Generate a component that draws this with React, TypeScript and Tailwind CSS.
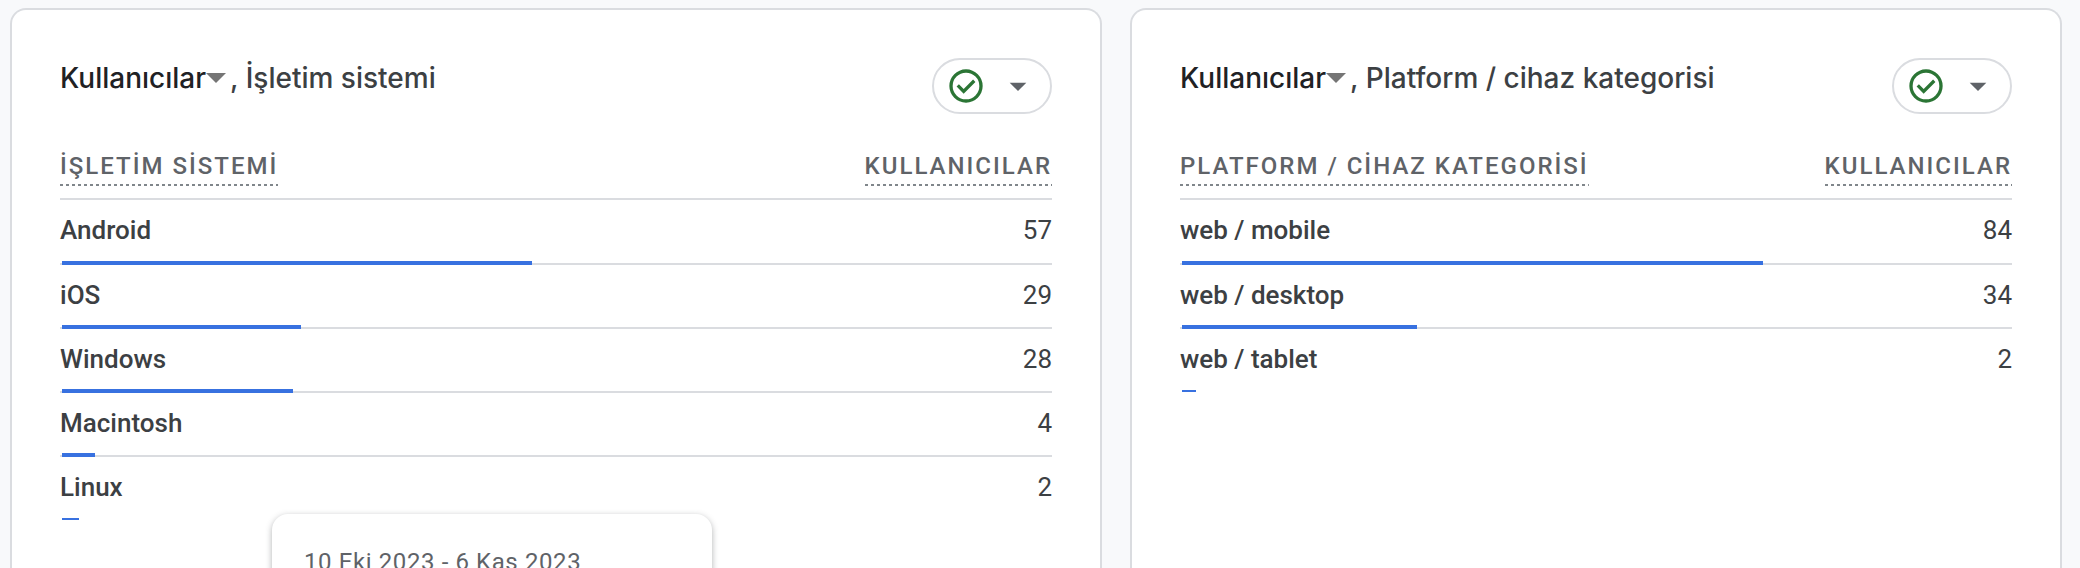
type Row = { name: string; users: number };

const systems: Row[] = [
  { name: "Android", users: 57 },
  { name: "iOS", users: 29 },
  { name: "Windows", users: 28 },
  { name: "Macintosh", users: 4 },
  { name: "Linux", users: 2 },
];

const platforms: Row[] = [
  { name: "web / mobile", users: 84 },
  { name: "web / desktop", users: 34 },
  { name: "web / tablet", users: 2 },
];

function StatusButton() {
  return (
    <button
      type="button"
      aria-label="Veri kalitesi"
      className="flex h-14 shrink-0 items-center gap-3 rounded-full border-2 border-[#dadce0] px-3"
    >
      <svg viewBox="0 0 24 24" className="size-10 fill-[#2b7535]">
        <path d="m10.6 16.6 7.05-7.05-1.4-1.4-5.65 5.65-2.85-2.85-1.4 1.4ZM12 22q-2.075 0-3.9-.788-1.825-.787-3.175-2.137-1.35-1.35-2.137-3.175Q2 14.075 2 12t.788-3.9q.787-1.825 2.137-3.175 1.35-1.35 3.175-2.137Q9.925 2 12 2t3.9.788q1.825.787 3.175 2.137 1.35 1.35 2.137 3.175Q22 9.925 22 12t-.788 3.9q-.787 1.825-2.137 3.175-1.35 1.35-3.175 2.137Q14.075 22 12 22Zm0-2q3.35 0 5.675-2.325Q20 15.35 20 12q0-3.35-2.325-5.675Q15.35 4 12 4 8.65 4 6.325 6.325 4 8.65 4 12q0 3.35 2.325 5.675Q8.65 20 12 20Z" />
      </svg>
      <svg viewBox="0 0 24 24" className="size-10 fill-[#5f6368]">
        <path d="M7 10l5 5 5-5z" />
      </svg>
    </button>
  );
}

function ColumnLabel({ text }: { text: string }) {
  return (
    <span className="inline-block bg-[repeating-linear-gradient(to_right,#80868b_0_3px,transparent_3px_6px)] bg-[length:100%_2px] bg-bottom bg-no-repeat pb-[2px] leading-9 tracking-[2px]">
      {text}
    </span>
  );
}

function ReportCard({
  dimension,
  column,
  rows,
}: {
  dimension: string;
  column: string;
  rows: Row[];
}) {
  const total = rows.reduce((sum, row) => sum + row.users, 0);

  return (
    <section className="min-w-0 rounded-t-2xl border-2 border-b-0 border-[#dadce0] bg-white px-12 pt-12">
      <div className="flex items-start justify-between">
        <h2 className="flex items-center font-[Inter,sans-serif] text-[28px] leading-10 font-[450] text-[#3c4043]">
          <button type="button" className="flex items-center text-[#202124]">
            Kullanıcılar
            <svg viewBox="0 0 20 10" className="h-[10px] w-5 fill-[#757575]">
              <path d="M0 0h20L10 10z" />
            </svg>
          </button>
          <span className="ml-1">, {dimension}</span>
        </h2>
        <StatusButton />
      </div>

      <table className="mt-8 w-full border-separate border-spacing-0">
        <thead>
          <tr className="h-[54px] text-2xl text-[#5f6368]">
            <th scope="col" className="border-b-2 border-[#dadce0] p-0 pb-3 text-left align-bottom font-medium">
              <ColumnLabel text={column} />
            </th>
            <th scope="col" className="border-b-2 border-[#dadce0] p-0 pb-3 text-right align-bottom font-medium">
              <ColumnLabel text="KULLANICILAR" />
            </th>
          </tr>
        </thead>
        <tbody className="text-[26px] leading-10 text-[#3c4043]">
          {rows.map((row, i) => {
            const last = i === rows.length - 1;
            return (
              <tr key={row.name} className="relative h-16 first:h-[65px]">
                <th
                  scope="row"
                  className={`p-0 pt-[10px] text-left align-top font-medium ${last ? "" : "border-b-2 border-[#dadce0]"}`}
                >
                  {row.name}
                  {/* share of the total, drawn over the row border */}
                  <div className="absolute inset-x-0 bottom-0 pl-[2px]">
                    <div
                      className={`bg-[#3871e0] ${last ? "mb-px h-[2px]" : "h-1"}`}
                      style={{ width: `${(row.users / total) * 100}%` }}
                    />
                  </div>
                </th>
                <td
                  className={`p-0 pt-[10px] text-right align-top ${last ? "" : "border-b-2 border-[#dadce0]"}`}
                >
                  {row.users}
                </td>
              </tr>
            );
          })}
        </tbody>
      </table>
    </section>
  );
}

export default function App() {
  return (
    <main className="relative grid h-screen grid-cols-[273fr_233fr] gap-7 overflow-hidden bg-[#f8f9fb] pt-2 pr-[18px] pl-[10px] font-[Roboto,sans-serif]">
      <ReportCard
        dimension="İşletim sistemi"
        column="İŞLETİM SİSTEMİ"
        rows={systems}
      />
      <ReportCard
        dimension="Platform / cihaz kategorisi"
        column="PLATFORM / CİHAZ KATEGORİSİ"
        rows={platforms}
      />

      <div
        role="tooltip"
        className="absolute top-[514px] left-[272px] w-[440px] rounded-2xl bg-white px-8 pt-8 pb-10 text-2xl tracking-wide text-[#5f6368] shadow-[0_2px_6px_rgba(60,64,67,0.4)]"
      >
        10 Eki 2023 - 6 Kas 2023
      </div>
    </main>
  );
}
